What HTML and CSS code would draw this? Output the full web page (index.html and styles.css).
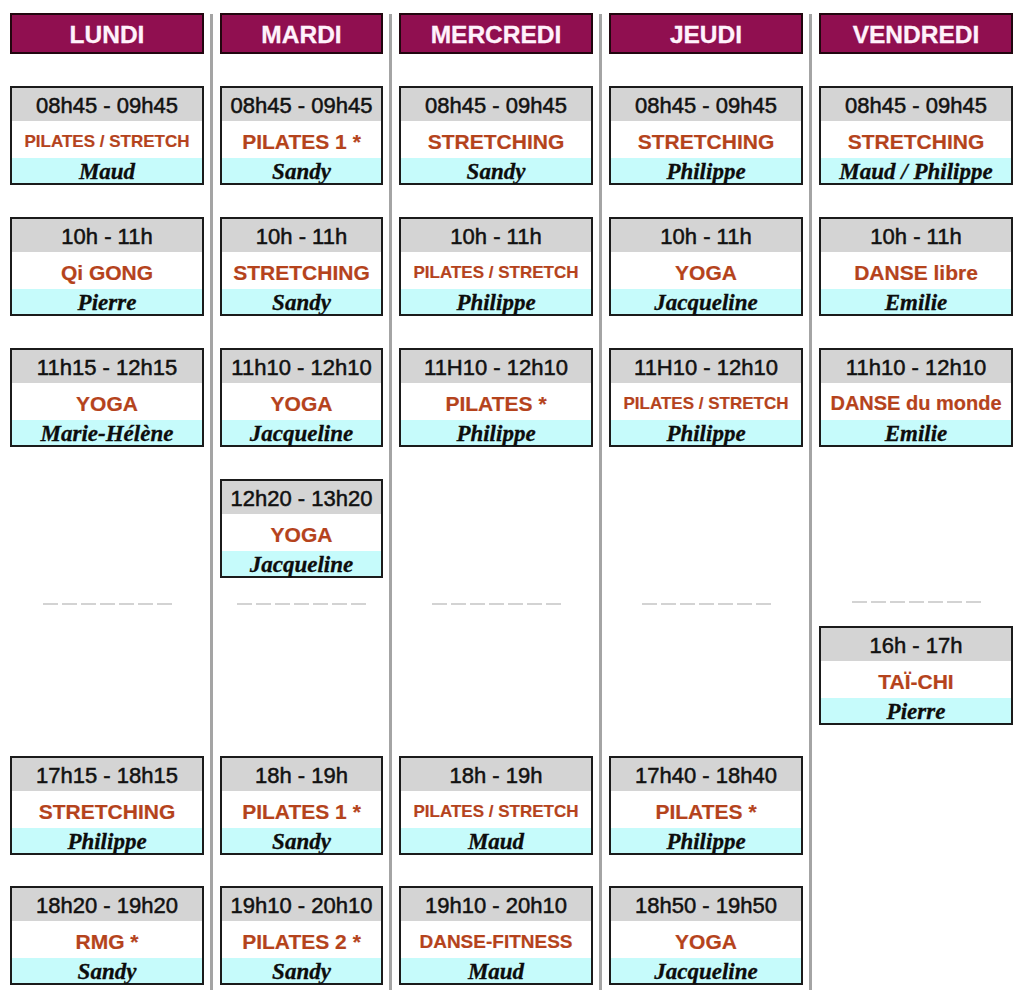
FILE: index.html
```html
<!DOCTYPE html>
<html lang="fr">
<head>
<meta charset="utf-8">
<title>Planning de la semaine</title>
<link rel="stylesheet" href="styles.css">
</head>
<body>
<div class="week">

  <section class="day">
    <h2 class="day-head">LUNDI</h2>
    <div class="slots">
      <div class="card"><div class="time">08h45 - 09h45</div><div class="title sm">PILATES / STRETCH</div><div class="who">Maud</div></div>
      <div class="card"><div class="time">10h - 11h</div><div class="title">Qi GONG</div><div class="who">Pierre</div></div>
      <div class="card"><div class="time">11h15 - 12h15</div><div class="title">YOGA</div><div class="who">Marie-Hélène</div></div>
    </div>
    <div class="midday"><div class="dash"></div></div>
    <div class="evening">
      <div class="card"><div class="time">17h15 - 18h15</div><div class="title">STRETCHING</div><div class="who">Philippe</div></div>
      <div class="card"><div class="time">18h20 - 19h20</div><div class="title">RMG *</div><div class="who">Sandy</div></div>
    </div>
  </section>

  <div class="sep"></div>

  <section class="day narrow">
    <h2 class="day-head">MARDI</h2>
    <div class="slots">
      <div class="card"><div class="time">08h45 - 09h45</div><div class="title">PILATES 1 *</div><div class="who">Sandy</div></div>
      <div class="card"><div class="time">10h - 11h</div><div class="title">STRETCHING</div><div class="who">Sandy</div></div>
      <div class="card"><div class="time">11h10 - 12h10</div><div class="title">YOGA</div><div class="who">Jacqueline</div></div>
      <div class="card"><div class="time">12h20 - 13h20</div><div class="title">YOGA</div><div class="who">Jacqueline</div></div>
    </div>
    <div class="midday"><div class="dash"></div></div>
    <div class="evening">
      <div class="card"><div class="time">18h - 19h</div><div class="title">PILATES 1 *</div><div class="who">Sandy</div></div>
      <div class="card"><div class="time">19h10 - 20h10</div><div class="title">PILATES 2 *</div><div class="who">Sandy</div></div>
    </div>
  </section>

  <div class="sep"></div>

  <section class="day">
    <h2 class="day-head">MERCREDI</h2>
    <div class="slots">
      <div class="card"><div class="time">08h45 - 09h45</div><div class="title">STRETCHING</div><div class="who">Sandy</div></div>
      <div class="card"><div class="time">10h - 11h</div><div class="title sm">PILATES / STRETCH</div><div class="who">Philippe</div></div>
      <div class="card"><div class="time">11H10 - 12h10</div><div class="title">PILATES *</div><div class="who">Philippe</div></div>
    </div>
    <div class="midday"><div class="dash"></div></div>
    <div class="evening">
      <div class="card"><div class="time">18h - 19h</div><div class="title sm">PILATES / STRETCH</div><div class="who">Maud</div></div>
      <div class="card"><div class="time">19h10 - 20h10</div><div class="title md">DANSE-FITNESS</div><div class="who">Maud</div></div>
    </div>
  </section>

  <div class="sep"></div>

  <section class="day">
    <h2 class="day-head">JEUDI</h2>
    <div class="slots">
      <div class="card"><div class="time">08h45 - 09h45</div><div class="title">STRETCHING</div><div class="who">Philippe</div></div>
      <div class="card"><div class="time">10h - 11h</div><div class="title">YOGA</div><div class="who">Jacqueline</div></div>
      <div class="card"><div class="time">11H10 - 12h10</div><div class="title sm">PILATES / STRETCH</div><div class="who">Philippe</div></div>
    </div>
    <div class="midday"><div class="dash"></div></div>
    <div class="evening">
      <div class="card"><div class="time">17h40 - 18h40</div><div class="title">PILATES *</div><div class="who">Philippe</div></div>
      <div class="card"><div class="time">18h50 - 19h50</div><div class="title">YOGA</div><div class="who">Jacqueline</div></div>
    </div>
  </section>

  <div class="sep"></div>

  <section class="day">
    <h2 class="day-head">VENDREDI</h2>
    <div class="slots">
      <div class="card"><div class="time">08h45 - 09h45</div><div class="title">STRETCHING</div><div class="who">Maud / Philippe</div></div>
      <div class="card"><div class="time">10h - 11h</div><div class="title">DANSE libre</div><div class="who">Emilie</div></div>
      <div class="card"><div class="time">11h10 - 12h10</div><div class="title lg">DANSE du monde</div><div class="who">Emilie</div></div>
    </div>
    <div class="midday early">
      <div class="dash"></div>
      <div class="card"><div class="time">16h - 17h</div><div class="title">TAÏ-CHI</div><div class="who">Pierre</div></div>
    </div>
  </section>

</div>
</body>
</html>
```

FILE: styles.css
```css
html, body {
  margin: 0;
  padding: 0;
  background: #ffffff;
}

body {
  font-family: "Liberation Sans", Arial, Helvetica, sans-serif;
  color: #111111;
  height: 999px;
  overflow: hidden;
}

.week {
  display: flex;
  align-items: stretch;
  padding: 13px 0 0 10px;
  height: 990px;
  box-sizing: border-box;
}

.day {
  width: 194px;
  display: flex;
  flex-direction: column;
  flex: none;
}

.day.narrow {
  width: 163px;
}

.sep {
  flex: none;
  width: 3px;
  background: #a4a4a4;
  margin: 1px 7px 0 6px;
}

.day-head {
  margin: 0 0 32px 0;
  height: 41px;
  box-sizing: border-box;
  padding-top: 3px;
  border: 2px solid #22060f;
  background: #900f50;
  color: #fff2fb;
  font-size: 24.5px;
  font-weight: bold;
  line-height: 1;
  display: flex;
  align-items: center;
  justify-content: center;
  -webkit-text-stroke: 0.3px #fff2fb;
}

.slots {
  height: 492px;
  display: flex;
  flex-direction: column;
  gap: 32px;
}

.midday {
  height: 178px;
  box-sizing: border-box;
  padding-top: 25px;
  display: flex;
  flex-direction: column;
  align-items: center;
}

.midday.early {
  padding-top: 23px;
}

.midday .card {
  margin-top: 23px;
  align-self: stretch;
}

.dash {
  width: 129px;
  height: 2px;
  background: repeating-linear-gradient(to right, #d3d3d3 0 15px, transparent 15px 19px);
}

.evening {
  display: flex;
  flex-direction: column;
  gap: 31px;
}

.card {
  border: 2px solid #1b1b1b;
  display: flex;
  flex-direction: column;
  background: #ffffff;
}

.time,
.title,
.who {
  display: flex;
  align-items: center;
  justify-content: center;
  line-height: 1;
  white-space: nowrap;
  box-sizing: border-box;
}

.time {
  height: 33px;
  padding-top: 3px;
  background: #d4d4d4;
  font-size: 22px;
  color: #111111;
  -webkit-text-stroke: 0.5px #111111;
}

.title {
  height: 37px;
  padding-top: 3px;
  font-size: 21px;
  font-weight: bold;
  color: #b5431c;
  -webkit-text-stroke: 0.2px #b5431c;
}

.title.sm {
  font-size: 17px;
}

.title.md {
  font-size: 19px;
}

.title.lg {
  font-size: 20px;
}

.who {
  height: 25px;
  padding-top: 1px;
  background: #c6fbfb;
  font-family: "Liberation Serif", "Times New Roman", serif;
  font-style: italic;
  font-weight: bold;
  font-size: 23px;
  color: #0d0d0d;
  -webkit-text-stroke: 0.3px #0d0d0d;
}
```
